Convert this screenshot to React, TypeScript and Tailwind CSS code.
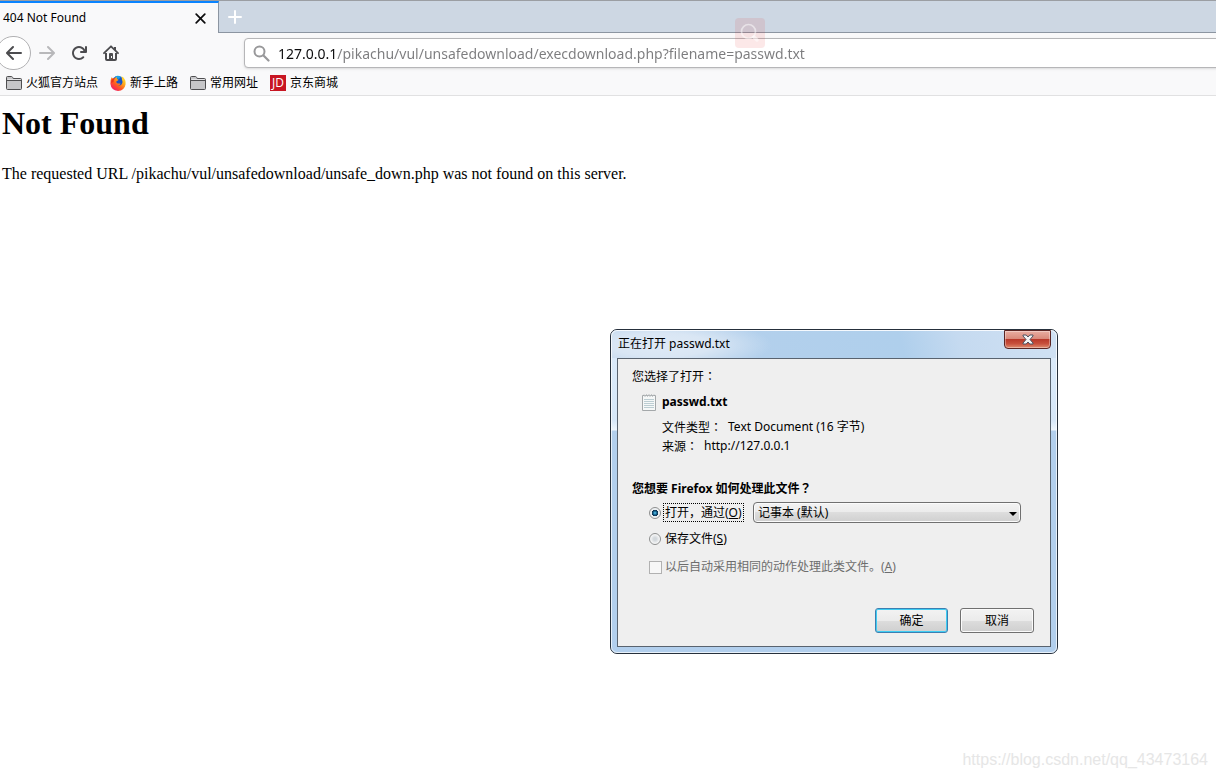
import { useState } from 'react'
import type { ReactNode } from 'react'

const UI_FONT = "font-['Noto_Sans','Noto_Sans_CJK_SC',sans-serif]"

const bookmarks = [
  { name: '火狐官方站点', icon: FolderIcon },
  { name: '新手上路', icon: FirefoxIcon },
  { name: '常用网址', icon: FolderIcon },
  { name: '京东商城', icon: JdIcon },
]

function FolderIcon() {
  return (
    <svg width="16" height="16" viewBox="0 0 16 16">
      <path d="M.5 13.500v-11q0-1 1-1h4q.7 0 1.200 1l.5 1h7.300q1 0 1 1v9q0 1-1 1h-13q-1 0-1-1z" fill="#c6c6c8" stroke="#4e4e50" />
      <path d="M1 5.500h14" stroke="#4e4e50" />
      <path d="M1.500 4.500h13" stroke="#e4e4e6" />
    </svg>
  )
}

function FirefoxIcon() {
  return (
    <svg width="16" height="16" viewBox="0 0 16 16">
      <defs>
        <linearGradient id="fox" x1="1" y1="0" x2="0.2" y2="1">
          <stop offset="0" stopColor="#fff04a" />
          <stop offset="0.35" stopColor="#ffb31a" />
          <stop offset="0.65" stopColor="#ff5a1f" />
          <stop offset="1" stopColor="#f0136f" />
        </linearGradient>
      </defs>
      <circle cx="8" cy="7" r="6" fill="#1b52c4" />
      <path d="M5 1.500Q8 0 11 1.800L9 4 6 3z" fill="#17a2e8" />
      <path
        d="M1.600 2.200Q2.600 3 3 3.600q1-.6 2.200-.4.500-1 1.400-1.400-.4 1.500.9 2.400l1 .6q-.2 1-1.600 1.300-.8.3-.6 1.200.8 1.600 2.600 1.200 1.200-.3 1.800.2-1 1.600-2.800 1.700 2.600.6 4-1.400 1.200-2.200-.1-5Q12.500 2.500 11 1q3 1 4.200 4.200.6 2 .4 4Q14.500 15.600 8 15.900 1.200 15.500.4 8.800.1 5 1.600 2.200z"
        fill="url(#fox)"
      />
      <path d="M1 8q.3-3.500 2-4.400 1-.6 2.200-.4Q3.300 5 3.500 7z" fill="#e8341f" />
    </svg>
  )
}

function JdIcon() {
  return (
    <span className="flex h-4 w-4 items-center justify-center bg-[#c81623] font-['Open_Sans',sans-serif] text-xs leading-4 font-medium text-white">
      JD
    </span>
  )
}

// full-width colon and question mark, centred in their cell
function Punct({ children }: { children: string }) {
  return <span className="font-['Noto_Sans_CJK_TC',sans-serif]">{children}</span>
}

function NavButton({ label, color, children }: { label: string; color: string; children: ReactNode }) {
  return (
    <button type="button" aria-label={label} className={`flex h-8 w-8 items-center justify-center ${color}`}>
      <svg width="16" height="16" viewBox="0 0 16 16" fill="currentColor">
        {children}
      </svg>
    </button>
  )
}

function TabStrip() {
  return (
    <div className="flex h-[33px] border-t border-[#9b9ea3] bg-[#cdd7e3]">
      <div className="flex w-[219px] items-center justify-between border-t-2 border-r border-t-[#0a84ff] border-r-[#8c95a1] bg-[#f9f9fa] pr-3 pl-[3px]">
        <span className="text-xs">404 Not Found</span>
        <button type="button" aria-label="Close tab">
          <svg width="11" height="11" viewBox="0 0 11 11" stroke="#0c0c0d" strokeWidth="1.700" strokeLinecap="round">
            <path d="M1.200 1.200l8.600 8.600M9.800 1.200L1.200 9.800" />
          </svg>
        </button>
      </div>
      <div className="flex flex-1 items-center border-b border-[#8c95a1] pl-2">
        <button type="button" aria-label="New tab">
          <svg width="16" height="16" viewBox="0 0 16 16" stroke="#fff" strokeWidth="2" strokeLinecap="round">
            <path d="M8 2v12M2 8h12" />
          </svg>
        </button>
      </div>
    </div>
  )
}

function NavBar() {
  const [url, setUrl] = useState('127.0.0.1/pikachu/vul/unsafedownload/execdownload.php?filename=passwd.txt')

  return (
    <div className="flex h-10 items-center overflow-hidden">
      <button
        type="button"
        aria-label="Back"
        className="-ml-1 flex h-[34px] w-[35px] shrink-0 items-center justify-center rounded-full border border-[#b1b1b3] bg-white text-[#4c4c4f]"
      >
        <svg width="16" height="16" viewBox="0 0 16 16" fill="currentColor">
          <path d="M15 7H3.414l4.293-4.293a1 1 0 0 0-1.414-1.414l-6 6a1 1 0 0 0 0 1.414l6 6a1 1 0 0 0 1.414-1.414L3.414 9H15a1 1 0 0 0 0-2z" />
        </svg>
      </button>
      <NavButton label="Forward" color="text-[#b8b8ba]">
        <path d="M15.707 7.293l-6-6a1 1 0 0 0-1.414 1.414L12.586 7H1a1 1 0 0 0 0 2h11.586l-4.293 4.293a1 1 0 1 0 1.414 1.414l6-6a1 1 0 0 0 0-1.414z" />
      </NavButton>
      <NavButton label="Reload" color="text-[#4c4c4f]">
        <path d="M15 1a1 1 0 0 0-1 1v2.418A6.995 6.995 0 1 0 8 15a6.954 6.954 0 0 0 4.950-2.050 1 1 0 0 0-1.414-1.414A5.019 5.019 0 1 1 12.549 6H10a1 1 0 0 0 0 2h5a1 1 0 0 0 1-1V2a1 1 0 0 0-1-1z" />
      </NavButton>
      <NavButton label="Home" color="text-[#4c4c4f]">
        <path d="M1 8.200L8 1.300l7 6.900" fill="none" stroke="currentColor" strokeWidth="1.800" strokeLinecap="round" strokeLinejoin="round" />
        <path d="M11 2h2v4l-2-2z" />
        <path d="M3 8v6q0 1 1 1h8q1 0 1-1V8" fill="none" stroke="currentColor" strokeWidth="2" />
        <path fillRule="evenodd" d="M6 15V9q0-1 1-1h2q1 0 1 1v6zM8 11h1v2H8z" />
      </NavButton>
      <label className="-mr-1 ml-[117px] flex h-[30px] flex-1 items-center gap-2 rounded-sm border border-[#b6b6b8] bg-white pl-2 shadow-sm">
        <svg width="17" height="17" viewBox="0 0 17 17" fill="none" stroke="#98989a" strokeWidth="2" strokeLinecap="round">
          <circle cx="6.500" cy="6.500" r="5" />
          <path d="M10.500 10.500l5 5" strokeWidth="2.200" />
        </svg>
        {/* the host part stays black, the path is dimmed */}
        <input
          aria-label="Address"
          value={url}
          onChange={(e) => setUrl(e.target.value)}
          className="h-full flex-1 bg-[linear-gradient(to_right,#0c0c0d_59px,#7c7c7e_59px)] bg-clip-text text-sm text-transparent outline-none"
        />
      </label>
    </div>
  )
}

function BookmarksBar() {
  return (
    <nav className="flex h-[23px] gap-3 border-b border-[#e1e1e2] pt-0.5 pl-1.5">
      {bookmarks.map((item) => (
        <a key={item.name} href="#" className="flex h-4 items-center gap-1 text-xs leading-4 whitespace-nowrap">
          <item.icon />
          {item.name}
        </a>
      ))}
    </nav>
  )
}

const radioClass =
  'h-3 w-3 shrink-0 appearance-none rounded-full border border-[#8e8f8f] bg-[radial-gradient(circle,#d3d8dc_20%,#fafafa_70%)] checked:bg-[radial-gradient(circle,#5fd0f5_0,#12608f_25%,#0b2f4c_42%,#e9edf0_48%,#f8f8f8_100%)]'

const buttonFace = 'bg-[linear-gradient(#f3f3f3_0%,#ebebeb_50%,#dddddd_50%,#cfcfcf_100%)]'

function DownloadDialog() {
  const [action, setAction] = useState('open')

  return (
    <section
      role="dialog"
      aria-labelledby="dialog-title"
      className="absolute top-[329px] left-[610px] w-[448px] rounded-[7px] border border-[#26303c] bg-[linear-gradient(#dcebfa_0px,#d6e7f8_90px,#eef6fd_100px,#b2cfed_101px)] text-xs"
    >
      <div className="rounded-md border border-white/70 px-[5px] pb-[5px]">
        <header className="-mx-[5px] flex h-[27px] items-start justify-between rounded-t-md bg-[radial-gradient(ellipse_110px_26px_at_50px_14px,#dfeaf6_0%,#d9e6f4_45%,transparent_100%),linear-gradient(75deg,#b9d2ec_0%,#b3d0ec_30%,#afcfec_65%,#c5daf0_78%,#d0e1f3_100%)] pr-[5px] pl-1.5">
          <h2 id="dialog-title" className="pt-1 leading-[18px]">
            正在打开 passwd.txt
          </h2>
          <button
            type="button"
            aria-label="关闭"
            className="-mt-px flex h-[19px] w-[47px] items-center justify-center rounded-b border border-[#5a2523] bg-[linear-gradient(#e9aea2_0%,#d98a7b_45%,#b9392a_50%,#c8503c_75%,#df8d70_100%)] shadow-[inset_0_0_0_1px_rgba(255,255,255,0.35)]"
          >
            <svg width="12" height="11" viewBox="0 0 12 11">
              <path
                d="M1 1h3.200L6 3l1.800-2H11v1L8 5.500 11 9v1H7.800L6 8l-1.800 2H1V9l3-3.500L1 2z"
                fill="#f4f4f4"
                stroke="#4c5261"
                strokeWidth="1"
              />
            </svg>
          </button>
        </header>
        <form onSubmit={(e) => e.preventDefault()} className="flex flex-col border border-[#59636f] bg-[#efefef] pt-2 pr-4 pb-[13px] pl-3.5">
          <p className="h-[18px] leading-[18px]">
            您选择了打开<Punct>：</Punct>
          </p>
          <div className="mt-2 flex h-[18px] items-center gap-1.5 pl-2.5">
            <svg width="14" height="17" viewBox="0 0 14 17">
              <path d="M.5 1.500h13v15H.5z" fill="#f6f8f8" stroke="#a4a8aa" />
              <path d="M2 .5l1 2 1.500-2 1 2 1.500-2 1 2 1.500-2 1 2 1.500-2" fill="none" stroke="#b4b8ba" />
              <path d="M2 5.500h10M2 7.500h10M2 9.500h10M2 11.500h10M2 13.500h10" stroke="#bccdd2" />
            </svg>
            <span className="leading-[18px] font-bold">passwd.txt</span>
          </div>
          <dl className="mt-1.5 pl-[30px] leading-[19px]">
            <div className="flex h-[19px] gap-1.5">
              <dt>
                文件类型<Punct>：</Punct>
              </dt>
              <dd>Text Document (16 字节)</dd>
            </div>
            <div className="flex h-[19px] gap-1.5">
              <dt>
                来源<Punct>：</Punct>
              </dt>
              <dd>http://127.0.0.1</dd>
            </div>
          </dl>
          <p className="mt-6 h-[18px] leading-[18px] font-bold">
            您想要 Firefox 如何处理此文件<Punct>？</Punct>
          </p>
          <div className="mt-1 flex h-[23px] items-center pl-[17px]">
            <input
              id="act-open"
              type="radio"
              name="action"
              checked={action === 'open'}
              onChange={() => setAction('open')}
              className={radioClass}
            />
            <label htmlFor="act-open" className="ml-0.5 w-[81px] border border-dotted border-black px-px leading-[17px] whitespace-nowrap">
              打开，通过(<u>O</u>)
            </label>
            <div className="relative ml-[9px] h-[21px] w-[268px]">
              <select
                aria-label="打开方式"
                className={`h-full w-full appearance-none rounded-sm border border-[#707070] pl-1 ${buttonFace} shadow-[inset_0_0_0_1px_#fbfbfb]`}
              >
                <option>记事本 (默认)</option>
              </select>
              <svg className="pointer-events-none absolute top-[10px] right-1" width="8" height="4" viewBox="0 0 8 4">
                <path d="M0 0h8L4 4z" />
              </svg>
            </div>
          </div>
          <div className="mt-1.5 flex items-center pl-[17px]">
            <input
              id="act-save"
              type="radio"
              name="action"
              checked={action === 'save'}
              onChange={() => setAction('save')}
              className={radioClass}
            />
            <label htmlFor="act-save" className="ml-1 leading-[18px]">
              保存文件(<u>S</u>)
            </label>
          </div>
          <div className="mt-2.5 flex items-center pl-[17px] text-[#6d6d6d]">
            <input
              id="remember"
              type="checkbox"
              disabled
              className="h-[13px] w-[13px] shrink-0 appearance-none border border-[#b1b1b1] bg-[#f7f7f7]"
            />
            <label htmlFor="remember" className="ml-[3px] leading-[18px]">
              以后自动采用相同的动作处理此类文件。(<u>A</u>)
            </label>
          </div>
          <div className="mt-8 flex justify-end gap-3">
            <button
              type="submit"
              className={`h-[25px] w-[73px] rounded-[3px] border border-[#3c7fb1] ${buttonFace} shadow-[inset_0_0_0_1px_#3fcdf3]`}
            >
              确定
            </button>
            <button
              type="button"
              className={`h-[25px] w-[74px] rounded-[3px] border border-[#707070] ${buttonFace} shadow-[inset_0_0_0_1px_#fbfbfb]`}
            >
              取消
            </button>
          </div>
        </form>
      </div>
    </section>
  )
}

export default function App() {
  return (
    <div className={`relative min-h-screen overflow-hidden bg-white text-black ${UI_FONT}`}>
      <header className="bg-[#f9f9fa]">
        <TabStrip />
        <NavBar />
        <BookmarksBar />
      </header>
      <main className="px-0.5 pt-[9px] font-['Liberation_Serif',serif]">
        <h1 className="text-[32px] leading-9 font-bold">Not Found</h1>
        <p className="mt-[22px] text-base leading-[22px]">
          The requested URL /pikachu/vul/unsafedownload/unsafe_down.php was not found on this server.
        </p>
      </main>

      {/* screenshot tool badge */}
      <div className="absolute top-[18px] left-[735px] flex h-[30px] w-[30px] items-center justify-center rounded bg-[#e02020]/10">
        <svg width="20" height="20" viewBox="0 0 20 20" fill="none" stroke="#fff" strokeOpacity="0.5" strokeLinecap="round">
          <circle cx="8.500" cy="8.500" r="7" strokeWidth="1.700" />
          <path d="M14 14l3 3" strokeWidth="3.500" />
        </svg>
      </div>

      <DownloadDialog />

      <p className="absolute right-2 bottom-2 font-['Liberation_Sans',sans-serif] text-base leading-5 text-[#e6e6e6]">
        https://blog.csdn.net/qq_43473164
      </p>
    </div>
  )
}
